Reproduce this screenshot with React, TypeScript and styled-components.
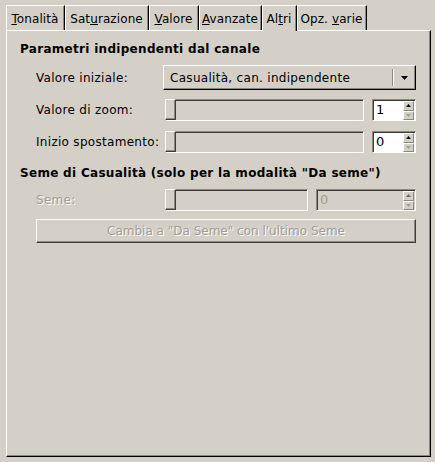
import React from "react";
import styled, { createGlobalStyle } from "styled-components";

const BG = "#d4d0c8";
const DARK = "#3e3c38";
const MID = "#8c887f";
const DIS = "#a19d94";

const Global = createGlobalStyle`
  html, body { margin: 0; padding: 0; background: ${BG}; }
  body { font-family: "DejaVu Sans", "Liberation Sans", sans-serif; font-size: 12px; letter-spacing: 0.3px; color: #000; }
  * { box-sizing: border-box; }
`;

const Page = styled.div`
  width: 435px;
  height: 462px;
  padding: 5px 4px 0 6px;
`;

const Notebook = styled.div`
  width: 425px;
  display: flex;
  flex-direction: column;
`;

const TabStrip = styled.div`
  display: flex;
  height: 25px;
  align-items: flex-end;
`;

const Tab = styled.div<{ $active?: boolean; $w: number }>`
  position: relative;
  z-index: ${(p) => (p.$active ? 2 : 1)};
  width: ${(p) => p.$w}px;
  flex: none;
  height: ${(p) => (p.$active ? "26px" : "25px")};
  margin-bottom: ${(p) => (p.$active ? "-1px" : "0")};
  padding: 6px 1px 0 0;
  line-height: 14px;
  letter-spacing: 0.1px;
  text-align: center;
  background: ${BG};
  border-top: 1px solid #fff;
  border-left: 1px solid #fff;
  border-right: 1px solid #000;
  box-shadow: inset -1px 0 0 ${MID};
  white-space: nowrap;
  overflow: hidden;
  u { text-decoration: underline; text-underline-offset: 1px; }
`;

const Panel = styled.div`
  height: 427px;
  border-top: 1px solid #fff;
  border-left: 1px solid #fff;
  border-right: 1px solid #000;
  border-bottom: 1px solid #000;
  box-shadow: inset -1px -1px 0 ${MID};
  padding: 11px 14px 0 13px;
  display: flex;
  flex-direction: column;
`;

const Heading = styled.div<{ $mt?: number }>`
  font-weight: bold;
  line-height: 14px;
  height: 14px;
  margin-top: ${(p) => p.$mt ?? 0}px;
  white-space: nowrap;
`;

const Row = styled.div<{ $mt: number; $h: number }>`
  display: flex;
  align-items: center;
  margin-left: 16px;
  margin-top: ${(p) => p.$mt}px;
  height: ${(p) => p.$h}px;
`;

const Label = styled.div<{ $disabled?: boolean }>`
  width: 127px;
  flex: none;
  white-space: nowrap;
  color: ${(p) => (p.$disabled ? DIS : "#000")};
  text-shadow: ${(p) => (p.$disabled ? "1px 1px 0 #fff" : "none")};
`;

const Combo = styled.div`
  flex: 1;
  height: 25px;
  display: flex;
  align-items: center;
  border-top: 1px solid #fff;
  border-left: 1px solid #fff;
  border-right: 1px solid #000;
  border-bottom: 1px solid #000;
  box-shadow: inset -1px -1px 0 ${MID};
  padding-left: 6px;
`;

const ComboText = styled.div`
  flex: 1;
  white-space: nowrap;
`;

const ComboSep = styled.div`
  width: 2px;
  height: 17px;
  border-left: 1px solid ${MID};
  border-right: 1px solid #fff;
`;

const ComboArrow = styled.div`
  width: 21px;
  display: flex;
  justify-content: center;
  align-items: center;
`;

const Trough = styled.div<{ $w: number }>`
  width: ${(p) => p.$w}px;
  margin-left: 2px;
  height: 22px;
  display: flex;
  border-top: 1px solid ${MID};
  border-left: 1px solid ${MID};
  border-bottom: 1px solid #fff;
  border-right: 1px solid #fff;
  box-shadow: inset 1px 1px 0 ${DARK};
`;

const Thumb = styled.div`
  width: 11px;
  margin: -1px 0 0 -1px;
  height: 21px;
  background: ${BG};
  border-top: 1px solid #fff;
  border-left: 1px solid #fff;
  border-right: 1px solid ${DARK};
  border-bottom: 1px solid ${DARK};
  box-shadow: inset -1px -1px 0 ${MID};
`;

const Spin = styled.div<{ $w: number; $disabled?: boolean }>`
  width: ${(p) => p.$w}px;
  margin-left: 8px;
  height: 22px;
  display: flex;
  background: ${(p) => (p.$disabled ? BG : "#fff")};
  border-top: 1px solid ${MID};
  border-left: 1px solid ${MID};
  border-bottom: 1px solid #fff;
  border-right: 1px solid #fff;
  box-shadow: inset 1px 1px 0 ${DARK};
`;

const SpinText = styled.div<{ $disabled?: boolean }>`
  flex: 1;
  padding: 2px 0 0 3px;
  line-height: 16px;
  font-size: 13px;
  color: ${(p) => (p.$disabled ? DIS : "#000")};
`;

const SpinButtons = styled.div`
  width: 11px;
  margin: 1px 1px 0 0;
  display: flex;
  flex-direction: column;
  background: ${BG};
`;

const SpinBtn = styled.div`
  flex: 1;
  display: flex;
  align-items: center;
  justify-content: center;
  border-top: 1px solid #fff;
  border-left: 1px solid #fff;
  border-right: 1px solid ${MID};
  border-bottom: 1px solid ${MID};
`;

const Button = styled.div`
  margin-left: 16px;
  margin-top: 8px;
  height: 24px;
  display: flex;
  align-items: center;
  justify-content: center;
  border-top: 1px solid #fff;
  border-left: 1px solid #fff;
  border-right: 1px solid ${DARK};
  border-bottom: 1px solid ${DARK};
  box-shadow: inset -1px -1px 0 ${MID};
  color: ${DIS};
  text-shadow: 1px 1px 0 #fff;
  letter-spacing: 0;
  white-space: nowrap;
`;

const Tri = ({ up, color }: { up?: boolean; color: string }) => (
  <svg width="5" height="3" viewBox="0 0 5 3">
    <polygon points={up ? "0,3 5,3 2.5,0" : "0,0 5,0 2.5,3"} fill={color} />
  </svg>
);

const SpinBox = ({ value, w, disabled }: { value: string; w: number; disabled?: boolean }) => (
  <Spin $w={w} $disabled={disabled}>
    <SpinText $disabled={disabled}>{value}</SpinText>
    <SpinButtons>
      <SpinBtn>
        <Tri up color={disabled ? "#6d6a64" : "#000"} />
      </SpinBtn>
      <SpinBtn>
        <Tri color={DIS} />
      </SpinBtn>
    </SpinButtons>
  </Spin>
);

const Slider = ({ w }: { w: number }) => (
  <Trough $w={w}>
    <Thumb />
  </Trough>
);

export default function App() {
  return (
    <>
      <Global />
      <Page>
        <Notebook>
          <TabStrip>
            <Tab $w={59}><u>T</u>onalità</Tab>
            <Tab $w={84}>Sat<u>u</u>razione</Tab>
            <Tab $w={50}><u>V</u>alore</Tab>
            <Tab $w={63}><u>A</u>vanzate</Tab>
            <Tab $w={35} $active>Al<u>t</u>ri</Tab>
            <Tab $w={70}>Opz. <u>v</u>arie</Tab>
          </TabStrip>
          <Panel>
            <Heading>Parametri indipendenti dal canale</Heading>
            <Row $mt={9} $h={25}>
              <Label>Valore iniziale:</Label>
              <Combo>
                <ComboText>Casualità, can. indipendente</ComboText>
                <ComboSep />
                <ComboArrow>
                  <svg width="7" height="4" viewBox="0 0 7 4">
                    <polygon points="0,0 7,0 3.5,4" fill="#000" />
                  </svg>
                </ComboArrow>
              </Combo>
            </Row>
            <Row $mt={9} $h={22}>
              <Label>Valore di zoom:</Label>
              <Slider w={199} />
              <SpinBox value="1" w={44} />
            </Row>
            <Row $mt={10} $h={22}>
              <Label>Inizio spostamento:</Label>
              <Slider w={199} />
              <SpinBox value="0" w={44} />
            </Row>
            <Heading $mt={13}>Seme di Casualità (solo per la modalità "Da seme")</Heading>
            <Row $mt={9} $h={22}>
              <Label $disabled>Seme:</Label>
              <Slider w={143} />
              <SpinBox value="0" w={100} disabled />
            </Row>
            <Button>Cambia a "Da Seme" con l'ultimo Seme</Button>
          </Panel>
        </Notebook>
      </Page>
    </>
  );
}
